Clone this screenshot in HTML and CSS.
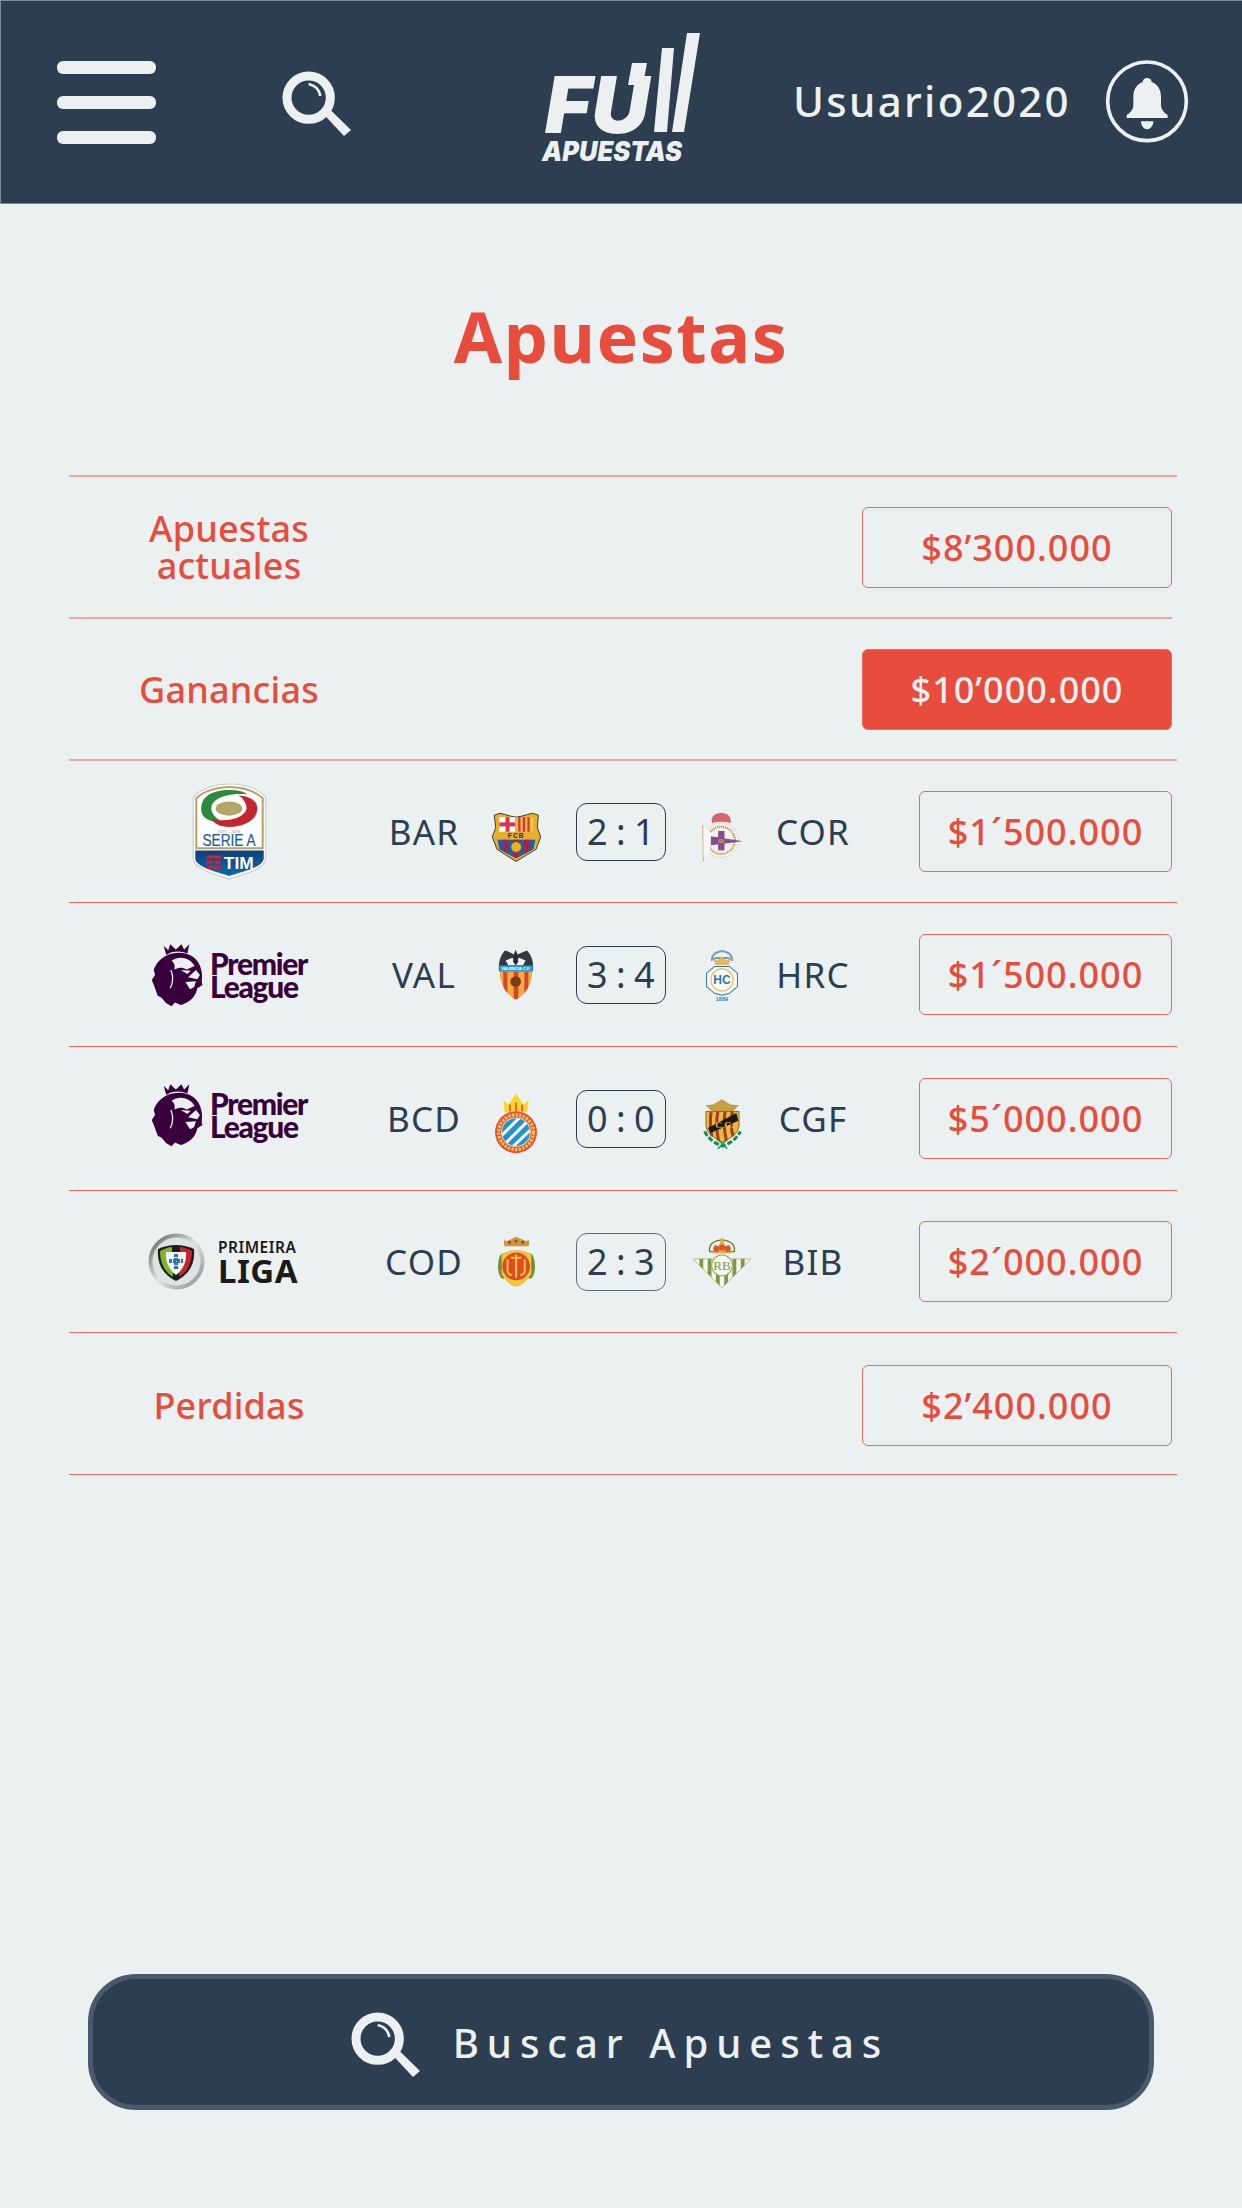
FILE: index.html
```html
<!DOCTYPE html>
<html lang="es">
<head>
<meta charset="utf-8">
<title>Full Apuestas</title>
<link rel="stylesheet" href="styles.css">
</head>
<body>
<svg class="defs" width="0" height="0" aria-hidden="true">
  <symbol id="search" viewBox="0 0 270 270">
    <circle cx="116" cy="125" r="65" fill="none" stroke="#ecf0f1" stroke-width="27"/>
    <path d="M116 84 C135 88 148 102 151 120" fill="none" stroke="#ecf0f1" stroke-width="8"/>
    <path d="M168 182 L184 164 L243 222 L222 240 Z" fill="#ecf0f1"/>
  </symbol>
  <symbol id="lion" viewBox="60 68 160 194">
    <path d="M98 76 L112 90 L118 72 L135 88 L152 72 L160 88 L176 72 L170 100 C150 90 122 92 106 104 Z" fill="#38003c"/>
    <path d="M125 100 C165 90 205 110 212 150 C218 175 210 185 216 195 L200 205 C195 235 170 250 150 256 L132 248 L122 260 L105 250 L92 234 L80 228 L70 200 L62 180 L72 165 L68 150 C75 125 100 105 125 100 Z" fill="#38003c"/>
    <path d="M122 122 C145 105 178 112 192 138 L168 148 C150 138 138 145 130 148 C134 138 130 128 122 122 Z" fill="#ecf0f1"/>
    <path d="M150 150 L180 152 L170 162 Z M196 150 L208 165 L200 178 L172 172 Z M164 186 L196 184 L190 202 L178 208 Z" fill="#ecf0f1"/>
    <path d="M120 150 C128 170 126 190 118 205" fill="none" stroke="#ecf0f1" stroke-width="4"/>
  </symbol>
</svg>

<div class="page">
  <header class="topbar">
    <div class="burger"><span></span><span></span><span></span></div>
    <svg class="icon-search topbar-search" width="90" height="90"><use href="#search"/></svg>
    <svg class="logo" width="190" height="150" viewBox="530 20 190 150">
      <text class="logo-full" x="545" y="132" textLength="104" lengthAdjust="spacingAndGlyphs">FU</text>
      <polygon points="632,62 647,62 643,84 628,84" fill="#ecf0f1"/>
      <polygon points="662,47 674,47 667,131 654,131" fill="#ecf0f1"/>
      <polygon points="687,32 700,32 684,131 672,131" fill="#ecf0f1"/>
      <text class="logo-sub" x="542" y="160" textLength="140" lengthAdjust="spacingAndGlyphs">APUESTAS</text>
    </svg>
    <span class="username">Usuario2020</span>
    <svg class="bell" width="100" height="100" viewBox="0 0 300 300">
      <circle cx="153" cy="148" r="118" fill="none" stroke="#ecf0f1" stroke-width="11"/>
      <path d="M153 78 C145 78 140 84 140 90 C122 97 112 112 112 135 V160 C112 175 100 183 92 190 V198 H215 V190 C207 183 195 175 195 160 V135 C195 112 185 97 167 90 C167 84 162 78 153 78 Z" fill="#ecf0f1"/>
      <path d="M135 208 H172 C172 222 163 232 153 232 C144 232 135 222 135 208 Z" fill="#ecf0f1"/>
    </svg>
  </header>

  <h1 class="title">Apuestas</h1>

  <section class="table">
    <div class="row row-soft row-short">
      <div class="label">Apuestas<br>actuales</div>
      <div class="amount amount-wide">$8’300.000</div>
    </div>
    <div class="row row-soft">
      <div class="label">Ganancias</div>
      <div class="amount amount-wide amount-solid">$10’000.000</div>
    </div>

    <div class="row">
      <div class="league">
        <svg width="75" height="97" viewBox="0 0 73 95">
          <defs><linearGradient id="sa" x1="0" y1="0" x2="0" y2="1"><stop offset="0" stop-color="#0d3f78"/><stop offset="1" stop-color="#0c6cb3"/></linearGradient></defs>
          <path d="M1 14 C10 4 25 1 36 1 C48 1 63 4 72 14 V74 C72 84 50 90 36 94 C23 90 1 84 1 74 Z" fill="#fff" stroke="#c9c9c4"/>
          <path d="M4 15 C12 7 26 4 36 4 C47 4 60 7 69 15 V64 H4 Z" fill="#fff" stroke="#b9a063" stroke-width="2"/>
          <ellipse cx="36" cy="25" rx="13" ry="7" fill="#b5a76b"/>
          <path d="M9 28 C7 12 22 6 40 7 C46 7 52 9 54 11 C44 10 24 11 19 22 C17 30 24 35 30 38 C18 39 10 35 9 28 Z" fill="#2c8a3c"/>
          <path d="M63 21 C67 33 54 43 36 43 C28 43 21 40 19 35 C32 39 50 35 53 26 C54 20 49 14 45 12 C55 13 61 16 63 21 Z" fill="#c4262e"/>
          <text class="sa-small" x="36" y="49" text-anchor="middle">2015 – 2016</text>
          <text class="sa-name" x="36" y="62" text-anchor="middle" textLength="52" lengthAdjust="spacingAndGlyphs">SERIE A</text>
          <path d="M3 66 H70 V74 C70 82 50 87 36 91 C23 87 3 82 3 74 Z" fill="url(#sa)"/>
          <rect x="14" y="71" width="14" height="3" fill="#d8202f"/><rect x="14" y="76" width="6" height="3" fill="#d8202f"/><rect x="22" y="76" width="6" height="3" fill="#d8202f"/><rect x="14" y="81" width="6" height="3" fill="#d8202f"/><rect x="22" y="81" width="6" height="3" fill="#d8202f"/>
          <text class="sa-tim" x="31" y="84">TIM</text>
        </svg>
      </div>
      <div class="code">BAR</div>
      <div class="crest crest-low">
        <svg width="49" height="50" viewBox="35 93 148 150">
          <path d="M42 102 Q60 92 75 100 Q92 106 108 108 Q125 106 142 100 Q158 92 175 102 L172 140 L182 168 L168 205 Q135 225 108 242 Q80 225 50 205 L36 168 L46 140 Z" fill="#e6b02e" stroke="#3b3b3b" stroke-width="3"/>
          <rect x="57" y="108" width="48" height="44" fill="#fff"/>
          <rect x="57" y="124" width="48" height="12" fill="#d8334a"/><rect x="76" y="108" width="12" height="44" fill="#d8334a"/>
          <rect x="110" y="108" width="50" height="44" fill="#f3c23c"/>
          <rect x="114" y="108" width="7" height="44" fill="#d8334a"/><rect x="128" y="108" width="7" height="44" fill="#d8334a"/><rect x="142" y="108" width="7" height="44" fill="#d8334a"/>
          <text class="crest-fcb" x="108" y="172" text-anchor="middle">FCB</text>
          <path d="M52 176 H166 L160 205 Q130 222 108 232 Q85 222 57 205 Z" fill="#1d5fa8"/>
          <path d="M68 176 H84 V217 L68 209 Z M132 176 H150 V209 L132 217 Z M100 176 H116 V228 L108 232 L100 228 Z" fill="#a5234f"/>
          <circle cx="108" cy="198" r="16" fill="#e5b52b" stroke="#6b5211" stroke-width="2"/>
        </svg>
      </div>
      <div class="score">2 : 1</div>
      <div class="crest crest-low">
        <svg width="42" height="50" viewBox="665 95 125 150">
          <path d="M697 128 Q692 100 725 97 Q758 100 753 128 Q725 120 697 128 Z" fill="#d9646f"/>
          <circle cx="725" cy="180" r="52" fill="#f5f3ea" stroke="#d8cfb4" stroke-width="2"/>
          <circle cx="725" cy="180" r="41" fill="none" stroke="#a8905c" stroke-width="7" stroke-dasharray="3 3"/>
          <path d="M694 168 L790 183 L694 195 Z" fill="#8a4a94"/>
          <rect x="716" y="152" width="19" height="58" fill="#8a4a94"/>
          <ellipse cx="725" cy="182" rx="10" ry="7" fill="#a98650"/>
          <path d="M670 135 L672 242" stroke="#c9b48a" stroke-width="4"/>
          <path d="M672 138 L695 158 L690 225 L672 232 Z" fill="#f8f8f2"/>
        </svg>
      </div>
      <div class="code">COR</div>
      <div class="amount">$1´500.000</div>
    </div>

    <div class="row row-tall">
      <div class="league">
        <svg width="53" height="64"><use href="#lion"/></svg>
        <div class="pl-text">Premier<br>League</div>
      </div>
      <div class="code">VAL</div>
      <div class="crest">
        <svg width="36" height="53" viewBox="55 55 108 158">
          <defs><clipPath id="valc"><path d="M60 125 H158 C158 165 135 195 108 210 C82 195 60 165 60 125 Z"/></clipPath></defs>
          <path d="M108 60 L114 74 Q130 66 142 62 Q164 85 160 124 H58 Q54 85 76 62 Q90 66 102 74 Z" fill="#333840"/>
          <path d="M78 92 L98 84 L108 98 L118 84 L138 92 L130 106 H86 Z" fill="#f1f1f1"/>
          <path d="M108 66 L116 96 L108 106 L100 96 Z" fill="#23272d"/>
          <rect x="59" y="107" width="100" height="19" fill="#2a9ed8"/>
          <text class="crest-val" x="108" y="121" text-anchor="middle" textLength="86" lengthAdjust="spacingAndGlyphs">VALENCIA C.F.</text>
          <g clip-path="url(#valc)">
            <rect x="58" y="124" width="102" height="90" fill="#f5ab3c"/>
            <rect x="71" y="124" width="12" height="90" fill="#d9432e"/><rect x="102" y="124" width="14" height="90" fill="#d9432e"/><rect x="134" y="124" width="12" height="90" fill="#d9432e"/>
          </g>
          <circle cx="108" cy="155" r="16" fill="#7b3b1c"/>
        </svg>
      </div>
      <div class="score">3 : 4</div>
      <div class="crest">
        <svg width="34" height="52" viewBox="680 58 100 155">
          <path d="M700 90 Q700 68 730 64 Q760 68 760 90 L748 85 H712 Z" fill="none" stroke="#6f9fbb" stroke-width="6"/>
          <path d="M704 84 L716 92 L730 80 L744 92 L756 84 L750 106 H710 Z" fill="#e5b65a"/>
          <path d="M684 130 L708 110 H752 L776 130 V170 L752 190 L730 196 L708 190 L684 170 Z" fill="#fdfdfb" stroke="#2274c9" stroke-width="3"/>
          <circle cx="730" cy="150" r="33" fill="#fff" stroke="#f2bf63" stroke-width="4"/>
          <text class="crest-rc" x="730" y="163" text-anchor="middle">HC</text>
          <text class="crest-year" x="730" y="212" text-anchor="middle">1889</text>
        </svg>
      </div>
      <div class="code">HRC</div>
      <div class="amount">$1´500.000</div>
    </div>

    <div class="row row-tall">
      <div class="league league-high">
        <svg width="53" height="64"><use href="#lion"/></svg>
        <div class="pl-text">Premier<br>League</div>
      </div>
      <div class="code">BCD</div>
      <div class="crest crest-low">
        <svg width="44" height="61" viewBox="42 38 132 182">
          <defs><clipPath id="espc"><circle cx="108" cy="155" r="42"/></clipPath></defs>
          <path d="M70 60 L85 72 L108 40 L131 72 L146 60 L142 95 H74 Z" fill="#f7d829"/>
          <path d="M90 72 V92 M108 66 V92 M126 72 V92" stroke="#e8503e" stroke-width="5"/>
          <circle cx="108" cy="155" r="63" fill="#e8503e"/>
          <circle cx="108" cy="155" r="52" fill="none" stroke="#f7c948" stroke-width="10" stroke-dasharray="7 4"/>
          <circle cx="108" cy="155" r="44" fill="#fff"/>
          <g clip-path="url(#espc)">
            <rect x="60" y="110" width="96" height="90" fill="#1f95d0"/>
            <path d="M60 170 L130 100 M75 190 L150 115 M92 205 L170 130" stroke="#fff" stroke-width="9"/>
          </g>
        </svg>
      </div>
      <div class="score">0 : 0</div>
      <div class="crest crest-low">
        <svg width="45" height="52" viewBox="662 50 136 156">
          <path d="M680 72 L702 70 L728 54 L754 70 L778 72 L760 90 H700 Z" fill="#c9a041" stroke="#8f6d22"/>
          <path d="M676 150 Q690 180 730 195 Q770 180 784 150" fill="none" stroke="#0f8f50" stroke-width="9" stroke-dasharray="16 6"/>
          <path d="M716 175 L744 203 M744 175 L716 203" stroke="#0f9a58" stroke-width="4"/>
          <path d="M680 90 H780 V135 Q775 165 730 182 Q685 165 680 135 Z" fill="#e8b93c" stroke="#8f6d22" stroke-width="3"/>
          <path d="M696 92 Q690 120 698 165 M716 90 Q708 130 718 178 M738 90 Q730 130 742 178 M760 90 Q752 130 762 165" fill="none" stroke="#a33a2c" stroke-width="9"/>
          <path d="M686 140 L772 95 L778 118 L694 155 Z" fill="#1c1a18"/>
          <text class="crest-cg" x="708" y="139">C.G.</text>
        </svg>
      </div>
      <div class="code">CGF</div>
      <div class="amount">$5´000.000</div>
    </div>

    <div class="row">
      <div class="league league-liga">
        <svg width="57" height="57" viewBox="0 0 57 57">
          <defs><linearGradient id="pl" x1="0" y1="0" x2="1" y2="1"><stop offset="0" stop-color="#5f5f5f"/><stop offset=".5" stop-color="#e4e4e4"/><stop offset="1" stop-color="#8a8a8a"/></linearGradient></defs>
          <circle cx="28.500" cy="28.500" r="26" fill="#dfe2e2" stroke="url(#pl)" stroke-width="4"/>
          <path d="M10 16 Q28 8 46 16 Q48 38 28 48 Q8 38 10 16 Z" fill="#1c1c1c"/>
          <path d="M12 18 Q20 14 24 14 L25 44 Q12 36 12 18 Z" fill="#7db52b"/>
          <path d="M44 18 Q36 14 32 14 L31 44 Q44 36 44 18 Z" fill="#c8252b"/>
          <path d="M18 19 H38 Q39 34 28 42 Q17 34 18 19 Z" fill="#f3f5f5"/>
          <path d="M28 21 V37 M21 28 H35" stroke="#2e6fb8" stroke-width="4" stroke-dasharray="3 1"/>
        </svg>
        <div class="liga-text"><span class="liga-top">PRIMEIRA</span><span class="liga-main">LIGA</span></div>
      </div>
      <div class="code">COD</div>
      <div class="crest">
        <svg width="39" height="53" viewBox="50 472 118 158">
          <path d="M72 505 Q68 478 78 490 L92 484 L108 476 L124 484 L140 490 Q150 478 146 505 Z" fill="#c89a3a"/>
          <circle cx="88" cy="493" r="5" fill="#c9382e"/><circle cx="108" cy="490" r="5" fill="#c9382e"/><circle cx="128" cy="493" r="5" fill="#c9382e"/>
          <ellipse cx="68" cy="565" rx="15" ry="38" fill="#6f8f3a"/><ellipse cx="150" cy="565" rx="15" ry="38" fill="#6f8f3a"/>
          <path d="M64 530 Q108 505 154 530 V590 Q130 622 108 626 Q86 622 64 590 Z" fill="#f2c932" stroke="#a8892c"/>
          <circle cx="108" cy="566" r="42" fill="#df4a2b"/>
          <path d="M82 545 V575 Q82 592 96 592 M108 530 V600 M120 592 Q134 592 134 575 V545 M92 540 H124" fill="none" stroke="#f2c932" stroke-width="6"/>
        </svg>
      </div>
      <div class="score score-thick">2 : 3</div>
      <div class="crest">
        <svg width="60" height="54" viewBox="643 472 174 156">
          <defs><clipPath id="betc"><path d="M646 541 H814 L730 625 Z"/></clipPath></defs>
          <path d="M694 520 Q690 490 730 486 Q770 490 766 520 Z" fill="none" stroke="#6f7a2c" stroke-width="4"/>
          <path d="M702 525 L708 498 L720 505 L730 476 L740 505 L752 498 L758 525 Z" fill="#e2b23a"/>
          <circle cx="714" cy="512" r="9" fill="#d9553a"/><circle cx="746" cy="512" r="9" fill="#d9553a"/><circle cx="730" cy="508" r="9" fill="#d9553a"/>
          <path d="M646 541 H814 L730 625 Z" fill="#f7f7ee" stroke="#a9a96a" stroke-width="2"/>
          <g clip-path="url(#betc)"><path d="M670 541 V590 M694 541 V610 M718 541 V625 M742 541 V625 M766 541 V610 M790 541 V590" stroke="#7b9a48" stroke-width="11"/></g>
          <circle cx="730" cy="560" r="30" fill="#f7f7ee" stroke="#9aa565" stroke-width="3"/>
          <text class="crest-rb" x="730" y="574" text-anchor="middle">RB</text>
        </svg>
      </div>
      <div class="code">BIB</div>
      <div class="amount">$2´000.000</div>
    </div>

    <div class="row row-last">
      <div class="label">Perdidas</div>
      <div class="amount amount-wide">$2’400.000</div>
    </div>
  </section>

  <button class="search-button" type="button">
    <svg class="icon-search" width="90" height="90"><use href="#search"/></svg>
    <span>Buscar Apuestas</span>
  </button>
</div>
</body>
</html>
```

FILE: styles.css
```css
* {
  box-sizing: border-box;
}

html,
body {
  margin: 0;
  padding: 0;
}

body {
  background: #ebf1f1;
  font-family: "Noto Sans", "Open Sans", sans-serif;
  color: #2c3e50;
}

.defs {
  position: absolute;
}

.page {
  width: 1242px;
  height: 2208px;
  display: flex;
  flex-direction: column;
  overflow: hidden;
}

/* Top bar */
.topbar {
  height: 204px;
  flex: none;
  display: flex;
  align-items: center;
  padding: 0 46px 0 56px;
  background: #2d3e50;
  border: 1px solid #7c8b9a;
  border-right: none;
}

.burger {
  width: 99px;
  height: 83px;
  display: flex;
  flex-direction: column;
  justify-content: space-between;
}

.burger span {
  display: block;
  height: 13px;
  border-radius: 6px;
  background: #ecf0f1;
}

.topbar-search {
  margin: -3px 0 0 114px;
}

.logo {
  margin: 0 0 13px 170px;
}

.logo-full {
  font-family: "Inter", "Liberation Sans", sans-serif;
  font-size: 78px;
  font-weight: 900;
  font-style: italic;
  fill: #ecf0f1;
}

.logo-sub {
  font-family: "Inter", "Liberation Sans", sans-serif;
  font-size: 27px;
  font-weight: 900;
  font-style: italic;
  fill: #ecf0f1;
}

.username {
  margin: -3px 0 0 73px;
  font-size: 42px;
  font-weight: 500;
  letter-spacing: 2.3px;
  color: #ecf0f1;
  white-space: nowrap;
}

.bell {
  margin: -1px 0 0 auto;
}

/* Title */
.title {
  flex: none;
  margin: 0;
  padding: 90px 0 97px;
  font-size: 70px;
  line-height: 84px;
  font-weight: 700;
  letter-spacing: 1.5px;
  text-align: center;
  color: #e74c3c;
}

/* Table */
.table {
  flex: none;
  width: 1108px;
  margin-left: 69px;
  border-top: 2px solid #f0a79f;
}

.row {
  height: 142px;
  display: grid;
  grid-template-columns: 320px 70px 114px 96px 106px 76px 1fr;
  align-items: center;
  justify-items: center;
  padding-right: 5px;
  border-bottom: 1px solid #ee6a5c;
}

.row-tall {
  height: 144px;
}

.row-soft {
  border-bottom: 2px solid #f0a79f;
  grid-template-columns: 320px 1fr;
}

.row-short {
  margin-right: 5px;
  padding-right: 0;
}

.row-last {
  grid-template-columns: 320px 1fr;
  padding-top: 3px;
}

.label {
  font-size: 36px;
  line-height: 37px;
  font-weight: 500;
  letter-spacing: 0.2px;
  text-align: center;
  color: #e74c3c;
}

.amount {
  justify-self: end;
  width: 253px;
  height: 81px;
  display: flex;
  align-items: center;
  justify-content: center;
  border: 1px solid #ee6a5c;
  border-radius: 6px;
  font-size: 36px;
  font-weight: 500;
  letter-spacing: 1px;
  color: #e74c3c;
}

.amount-wide {
  width: 310px;
}

.amount-solid {
  background: #e74c3c;
  color: #ecf0f1;
}

.league {
  display: flex;
  align-items: center;
  justify-content: center;
  gap: 6px;
}

.league-liga {
  margin-right: 12px;
}

.league-high {
  margin-top: -8px;
}

.code {
  font-size: 35px;
  letter-spacing: 1.2px;
  white-space: nowrap;
}

.crest {
  display: flex;
  align-items: center;
  justify-content: center;
}

.crest-low {
  margin-top: 10px;
}

.score {
  width: 90px;
  height: 58px;
  display: flex;
  align-items: center;
  justify-content: center;
  border: 1px solid #2c3e50;
  border-radius: 11px;
  font-size: 36px;
  letter-spacing: 0.5px;
  word-spacing: -2px;
  white-space: nowrap;
}

.score-thick {
  border-color: #5d6e80;
}

/* League logos */
.pl-text {
  font-family: "Lato", "Noto Sans", sans-serif;
  font-size: 30px;
  line-height: 23px;
  font-weight: 900;
  letter-spacing: -1.3px;
  color: #38003c;
  padding-top: 1px;
}

.liga-text {
  display: flex;
  flex-direction: column;
  margin-left: 7px;
  color: #1a1a1a;
}

.liga-top {
  font-size: 15.500px;
  line-height: 18px;
  font-weight: 600;
  letter-spacing: 0.5px;
}

.liga-main {
  font-size: 33px;
  line-height: 29px;
  font-weight: 700;
  letter-spacing: 0.5px;
}

.sa-small {
  font-size: 4px;
  fill: #a08d52;
}

.sa-name {
  font-family: "Liberation Sans", sans-serif;
  font-size: 16px;
  font-weight: 400;
  fill: #1d5a9c;
  stroke: #1d5a9c;
  stroke-width: 0.2px;
}

.sa-tim {
  font-family: "Liberation Sans", sans-serif;
  font-size: 17px;
  font-weight: 700;
  fill: #fff;
}

/* Crest lettering */
.crest-fcb {
  font-family: "Liberation Sans", sans-serif;
  font-size: 20px;
  font-weight: 700;
  letter-spacing: 3px;
  fill: #3b2b10;
}

.crest-val {
  font-family: "Liberation Sans", sans-serif;
  font-size: 13px;
  font-weight: 700;
  fill: #fff;
}

.crest-rc {
  font-family: "Liberation Sans", sans-serif;
  font-size: 36px;
  font-weight: 700;
  fill: #2274c9;
}

.crest-year {
  font-family: "Liberation Sans", sans-serif;
  font-size: 15px;
  font-weight: 700;
  letter-spacing: 1px;
  fill: #2274c9;
}

.crest-cg {
  font-family: "Liberation Serif", serif;
  font-size: 28px;
  font-weight: 700;
  fill: #e8b93c;
}

.crest-rb {
  font-family: "Liberation Serif", serif;
  font-size: 38px;
  fill: #7b9a48;
}

/* Search button */
.search-button {
  flex: none;
  width: 1066px;
  height: 136px;
  margin: auto 0 98px 88px;
  padding: 0 14px 0 0;
  display: flex;
  align-items: center;
  justify-content: center;
  gap: 24px;
  background: #2d3e50;
  border: 5px solid #4a5a6c;
  border-radius: 48px;
  font-family: inherit;
  font-size: 40px;
  font-weight: 500;
  letter-spacing: 8px;
  color: #ecf0f1;
}
```
